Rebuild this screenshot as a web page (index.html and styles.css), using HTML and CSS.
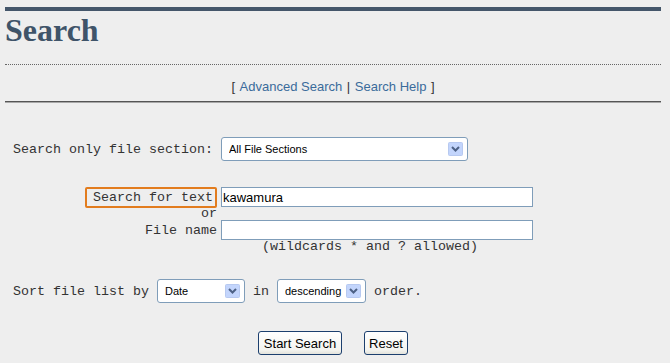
FILE: index.html
```html
<!DOCTYPE html>
<html lang="en">
<head>
<meta charset="UTF-8">
<title>Search</title>
<link rel="stylesheet" href="styles.css">
</head>
<body>
<div class="page">
  <div class="topbar"></div>
  <h1 class="title">Search</h1>
  <div class="dots"></div>
  <p class="links">[ <a href="#">Advanced Search</a> | <a href="#">Search Help</a> ]</p>
  <div class="rule"></div>

  <form class="search-form" onsubmit="return false;">
    <div class="row section-row">
      <span class="mono">Search only file section:</span>
      <span class="pick pick-wide">
        <select><option>All File Sections</option></select>
        <svg class="arrow" width="15" height="14" viewBox="0 0 15 14"><rect x="0.5" y="0.5" width="14" height="13" rx="1" fill="#c3d5fc" stroke="#b7c9f0"/><path d="M4 5 L7.5 8.5 L11 5" fill="none" stroke="#4d6185" stroke-width="2"/></svg>
      </span>
    </div>

    <div class="text-block">
      <div class="row tall">
        <span class="key"><span class="mono hl">Search for text</span></span>
        <input type="text" class="field" value="kawamura">
      </div>
      <div class="row short">
        <span class="key mono">or</span>
      </div>
      <div class="row tall">
        <span class="key mono">File name</span>
        <input type="text" class="field">
      </div>
      <div class="row short">
        <span class="key"></span>
        <span class="hint mono">(wildcards * and ? allowed)</span>
      </div>
    </div>

    <div class="row sort-row">
      <span class="mono">Sort file list by</span>
      <span class="pick pick-date">
        <select><option>Date</option></select>
        <svg class="arrow" width="15" height="14" viewBox="0 0 15 14"><rect x="0.5" y="0.5" width="14" height="13" rx="1" fill="#c3d5fc" stroke="#b7c9f0"/><path d="M4 5 L7.5 8.5 L11 5" fill="none" stroke="#4d6185" stroke-width="2"/></svg>
      </span>
      <span class="mono">in</span>
      <span class="pick pick-order">
        <select><option>descending</option></select>
        <svg class="arrow" width="15" height="14" viewBox="0 0 15 14"><rect x="0.5" y="0.5" width="14" height="13" rx="1" fill="#c3d5fc" stroke="#b7c9f0"/><path d="M4 5 L7.5 8.5 L11 5" fill="none" stroke="#4d6185" stroke-width="2"/></svg>
      </span>
      <span class="mono">order.</span>
    </div>

    <div class="buttons">
      <button type="submit" class="btn btn-start">Start Search</button>
      <button type="reset" class="btn btn-reset">Reset</button>
    </div>
  </form>
</div>
</body>
</html>
```

FILE: styles.css
```css
body {
  margin: 0;
  background: #eeeeee;
  font-family: "Liberation Sans", Arial, sans-serif;
}
.page {
  margin: 0 9px 0 5px;
  padding-top: 7px;
}
.topbar {
  height: 4px;
  background: #44566a;
}
.title {
  margin: 1px 0 0;
  font-family: "Liberation Serif", "Times New Roman", serif;
  font-size: 32px;
  line-height: 36px;
  font-weight: bold;
  color: #3f5469;
}
.dots {
  margin-top: 16px;
  border-top: 1px dotted #666;
}
.links {
  margin: 14px 0 0;
  text-align: center;
  font-size: 13px;
  line-height: 16px;
  word-spacing: 1px;
  color: #333;
}
.links a {
  color: #3a6b9b;
  text-decoration: none;
  word-spacing: 0;
}
.rule {
  margin-top: 6px;
  border-top: 1px solid #555;
  border-bottom: 1px solid #a8a8a8;
}

.search-form {
  padding-left: 8px;
}
.mono {
  font-family: "Liberation Mono", "Courier New", monospace;
  font-size: 13.33px;
  color: #333;
  white-space: pre;
}
.row {
  display: flex;
  align-items: center;
}
.section-row {
  margin-top: 34px;
  gap: 8px;
}
.pick {
  position: relative;
  display: inline-flex;
  height: 24px;
}
.pick select {
  appearance: none;
  -webkit-appearance: none;
  width: 100%;
  height: 24px;
  margin: 0;
  padding: 0 0 0 7px;
  border: 1px solid #7f9db9;
  border-radius: 3px;
  background: #fff;
  font-family: "Liberation Sans", Arial, sans-serif;
  font-size: 11px;
  color: #000;
}
.pick .arrow {
  position: absolute;
  right: 5px;
  top: 5px;
}
.pick-wide {
  width: 247px;
}
.pick-date {
  width: 88px;
}
.pick-order {
  width: 89px;
}

.text-block {
  margin-top: 26px;
}
.tall {
  height: 20px;
}
.short {
  height: 13px;
}
.key {
  width: 204px;
  margin-right: 4px;
  display: flex;
  justify-content: flex-end;
  line-height: 13px;
}
.hl {
  border: 2px solid #e27c1e;
  border-radius: 2px;
  padding: 1px 2px 0 6px;
  height: 16px;
  line-height: 16px;
}
.field {
  width: 312px;
  height: 20px;
  box-sizing: border-box;
  margin: 0;
  padding: 0 1px;
  border: 1px solid #7f9db9;
  background: #fff;
  font-family: "Liberation Sans", Arial, sans-serif;
  font-size: 13px;
  color: #000;
}
.hint {
  width: 312px;
  text-align: center;
  line-height: 13px;
  padding-right: 14px;
  box-sizing: border-box;
}

.sort-row {
  margin-top: 26px;
  gap: 8px;
}

.buttons {
  margin: 28px 0 0 -8px;
  display: flex;
  justify-content: center;
  gap: 22px;
}
.btn {
  height: 24px;
  margin: 0;
  padding: 0;
  border: 1px solid #1c3f6e;
  border-radius: 3px;
  background: linear-gradient(#ffffff, #f4f4f0 80%, #e3e3dc);
  font-family: "Liberation Sans", Arial, sans-serif;
  font-size: 13px;
  color: #000;
}
.btn-start {
  width: 84px;
}
.btn-reset {
  width: 44px;
}
```
